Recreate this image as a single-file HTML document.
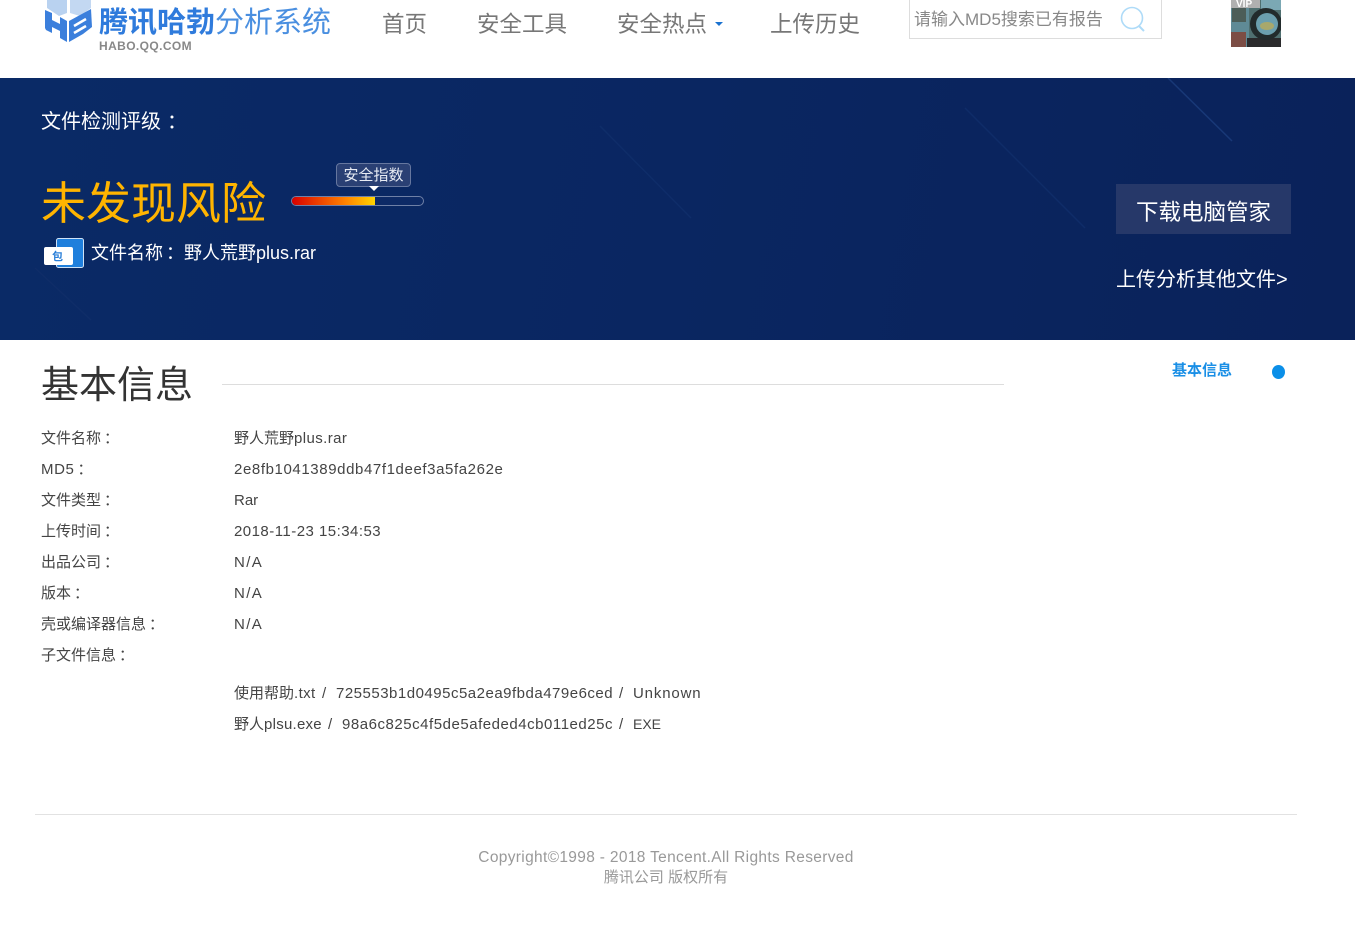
<!DOCTYPE html>
<html lang="zh-CN"><head><meta charset="utf-8"><title>腾讯哈勃分析系统</title>
<style>
html,body{margin:0;padding:0;background:#fff}
body{width:1355px;height:929px;position:relative;overflow:hidden;font-family:"Liberation Sans","Noto Sans CJK SC",sans-serif;color:#444}
.a{position:absolute;white-space:pre;line-height:1}
.l{font-size:15px;color:#444}
.c{margin-left:3px}
.banner{position:absolute;left:0;top:78px;width:1355px;height:262px;background:linear-gradient(100deg,#0a2a66 0%,#0a2661 50%,#0a225a 100%)}
</style></head><body>
<svg class="a" style="left:44px;top:0" width="50" height="43" viewBox="0 0 50 43">
<path d="M3 8V0H23V13L15 16Z" fill="#b9d2f0"/><path d="M26 0H47V8L36 16 26 13Z" fill="#c3d8f2"/>
<path d="M1 10 8 13V20L16 24V17L23 21V42L16 38V31L8 27V33L2 30 1 28Z" fill="#3b7fdc"/>
<path d="M25 21 47 9 48 27 39 34 25 42Z" fill="#3b7fdc"/>
<path d="M30 26 42 19M30 33 42 26" stroke="#fff" stroke-width="2.5" fill="none"/>
</svg>
<div class="a" style="left:99px;top:9px;font-size:29px;color:#2f7bdc;font-weight:bold">腾讯哈勃<span style="font-weight:normal;color:#4a8fe0">分析系统</span></div>
<div class="a" style="left:99px;top:40px;font-size:12px;font-weight:bold;color:#888;letter-spacing:.4px">HABO.QQ.COM</div>
<div class="a" style="left:382px;top:14px;font-size:22.5px;color:#777">首页</div>
<div class="a" style="left:477px;top:14px;font-size:22.5px;color:#777">安全工具</div>
<div class="a" style="left:617px;top:14px;font-size:22.5px;color:#777">安全热点</div>
<div class="a" style="left:715px;top:22px;width:0;height:0;border-left:4.5px solid transparent;border-right:4.5px solid transparent;border-top:4.5px solid #1a72d0"></div>
<div class="a" style="left:770px;top:14px;font-size:22.5px;color:#777">上传历史</div>
<div class="a" style="left:909px;top:-2px;width:251px;height:39px;border:1px solid #ddd"></div>
<div class="a" style="left:914px;top:11px;font-size:17px;color:#888">请输入MD5搜索已有报告</div>
<svg class="a" style="left:1119px;top:5px" width="28" height="27" viewBox="0 0 28 27"><circle cx="13" cy="13" r="10.5" fill="none" stroke="#aedbf8" stroke-width="1.6"/><path d="M20 21 25 26" stroke="#aedbf8" stroke-width="2"/></svg>
<svg class="a" style="left:1231px;top:0" width="50" height="47" viewBox="0 0 50 47">
<rect width="50" height="47" fill="#4f6f70"/><rect x="0" width="18" height="47" fill="#5f8a96"/><rect x="30" width="20" height="10" fill="#7ba8b4"/>
<rect x="1" y="8" width="14" height="14" fill="#4c5d58"/><rect x="0" y="32" width="15" height="15" fill="#7c4d45"/><rect x="16" y="38" width="34" height="9" fill="#2a2a2c"/>
<circle cx="35" cy="24" r="16" fill="#222b2c"/><circle cx="36" cy="24" r="11" fill="#6b9fae"/><ellipse cx="36" cy="26" rx="7" ry="4" fill="#a8a86c"/>
<rect width="29" height="8" fill="#b0b0b0"/><text x="5" y="7" font-size="10" font-weight="bold" fill="#fff" font-family="Liberation Sans">VIP</text></svg>

<div class="banner">
<svg class="a" style="left:0;top:0" width="1355" height="262" viewBox="0 0 1355 262">
<g fill="none" stroke-width="1.5"><path d="M1168 0 1232 63" stroke="#183877"/><path d="M965 30 1085 150" stroke="#0f2c68"/><path d="M600 48 691 140" stroke="#0f2d69"/><path d="M35 190 91 242" stroke="#0f2d68"/></g></svg>
</div>
<div class="a" style="left:41px;top:112px;font-size:20px;color:#fff">文件检测评级<span style="margin-left:6px">：</span></div>
<div class="a" style="left:41px;top:181px;font-size:45px;color:#ffb400">未发现风险</div>
<div class="a" style="left:336px;top:163px;width:73px;height:22px;border:1.5px solid #66779f;border-radius:4px;background:#2a4074;color:#e8ecf4;font-size:15px;line-height:24px;text-align:center">安全指数</div>
<div class="a" style="left:369px;top:186px;width:0;height:0;border-left:5px solid transparent;border-right:5px solid transparent;border-top:5px solid #fff"></div>
<div class="a" style="left:291px;top:196px;width:131px;height:8px;border:1.5px solid #6f80a6;border-radius:5px;background:#0d2a66;overflow:hidden"><div style="width:83px;height:8px;background:linear-gradient(90deg,#d80000,#ff8400 65%,#ffd400)"></div></div>
<svg class="a" style="left:44px;top:238px" width="40" height="30" viewBox="0 0 40 30"><rect x="12.5" y=".5" width="27" height="29" rx="2" fill="#1f7fdc" stroke="#cfe2f6"/><rect x="0" y="9" width="29" height="18" rx="2" fill="#fff"/><text x="8" y="22" font-size="11" fill="#2a7fd8" font-weight="bold" font-family="Noto Sans CJK SC">包</text></svg>
<div class="a" style="left:91px;top:244px;font-size:18px;color:#fff">文件名称<span style="margin-left:3px">：</span></div>
<div class="a" style="left:184px;top:244px;font-size:18px;color:#fff">野人荒野plus.rar</div>
<div class="a" style="left:1116px;top:184px;width:175px;height:50px;background:#263869"></div>
<div class="a" style="left:1136px;top:202px;font-size:22.5px;color:#fff">下载电脑管家</div>
<div class="a" style="left:1116px;top:270px;font-size:20px;color:#fff">上传分析其他文件&gt;</div>

<div class="a" style="left:41px;top:367px;font-size:38px;color:#333">基本信息</div>
<div class="a" style="left:222px;top:384px;width:782px;height:1px;background:#ddd"></div>
<div class="a" style="left:1172px;top:363px;font-size:15px;font-weight:bold;color:#1a8fe6">基本信息</div>
<div class="a" style="left:1272px;top:365px;width:13px;height:14px;border-radius:50%;background:#0b8fe8"></div>

<div class="a l" style="left:41px;top:431px">文件名称<span class="c">：</span></div><div class="a l" style="left:234px;top:431px">野人荒野<span style="letter-spacing:.4px">plus.rar</span></div>
<div class="a l" style="left:41px;top:462px;"><span style="letter-spacing:.6px">MD5</span><span class="c">：</span></div><div class="a l" style="left:234px;top:462px;letter-spacing:.6px">2e8fb1041389ddb47f1deef3a5fa262e</div>
<div class="a l" style="left:41px;top:493px">文件类型<span class="c">：</span></div><div class="a l" style="left:234px;top:493px">Rar</div>
<div class="a l" style="left:41px;top:524px">上传时间<span class="c">：</span></div><div class="a l" style="left:234px;top:524px;letter-spacing:.47px">2018-11-23 15:34:53</div>
<div class="a l" style="left:41px;top:555px">出品公司<span class="c">：</span></div><div class="a l" style="left:234px;top:555px;letter-spacing:1.4px">N/A</div>
<div class="a l" style="left:41px;top:586px">版本<span class="c">：</span></div><div class="a l" style="left:234px;top:586px;letter-spacing:1.4px">N/A</div>
<div class="a l" style="left:41px;top:617px">壳或编译器信息<span class="c">：</span></div><div class="a l" style="left:234px;top:617px;letter-spacing:1.4px">N/A</div>
<div class="a l" style="left:41px;top:648px">子文件信息<span class="c">：</span></div>
<div class="a l" style="left:234px;top:686px">使用帮助<span style="letter-spacing:.4px">.txt</span></div><div class="a l" style="left:322px;top:686px">/</div><div class="a l" style="left:336px;top:686px;letter-spacing:.5px">725553b1d0495c5a2ea9fbda479e6ced</div><div class="a l" style="left:619px;top:686px">/</div><div class="a l" style="left:633px;top:686px;letter-spacing:.85px">Unknown</div>
<div class="a l" style="left:234px;top:717px">野人<span style="letter-spacing:.25px">plsu.exe</span></div><div class="a l" style="left:328px;top:717px">/</div><div class="a l" style="left:342px;top:717px;letter-spacing:.53px">98a6c825c4f5de5afeded4cb011ed25c</div><div class="a l" style="left:619px;top:717px">/</div><div class="a l" style="left:633px;top:717px;font-size:14px">EXE</div>

<div class="a" style="left:35px;top:814px;width:1262px;height:1px;background:#e2e2e2"></div>
<div class="a" style="left:35px;width:1262px;text-align:center;top:850px;font-size:15.5px;color:#999;letter-spacing:.33px">Copyright©1998 - 2018 Tencent.All Rights Reserved</div>
<div class="a" style="left:35px;width:1262px;text-align:center;top:870px;font-size:15px;color:#999">腾讯公司 版权所有</div>
</body></html>
